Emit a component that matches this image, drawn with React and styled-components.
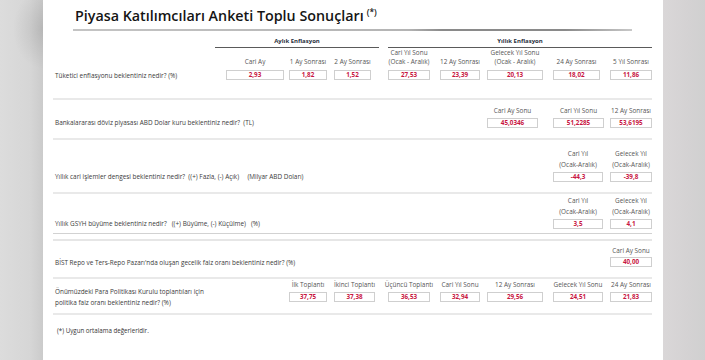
import React from 'react';
import styled, { createGlobalStyle } from 'styled-components';

const GlobalStyle = createGlobalStyle`
  html, body {
    margin: 0;
    padding: 0;
    background: #fff;
  }
  body {
    font-family: 'Open Sans', 'Liberation Sans', sans-serif;
    color: #333;
  }
`;

// column tracks from x=215 to x=652: gap before each box + box width
const GAPS = [11, 5, 7, 17, 10, 7, 10, 7];
const BOX_W = [58, 38, 37, 42, 40, 56, 50, 42];
const TRACKS = GAPS.map((g, i) => g + BOX_W[i]);

const Page = styled.div`
  display: flex;
  width: 705px;
  height: 360px;
  overflow: hidden;
`;

const SideLeft = styled.div`
  width: 43px;
  flex: none;
  background:
    radial-gradient(ellipse 30px 40px at 100% 8%, rgba(0, 0, 0, 0.1), transparent),
    linear-gradient(to right, #dcdcdc 0%, #d6d6d6 70%, #cbcbcb 100%);
`;

const SideRight = styled.div`
  flex: 1;
  background: linear-gradient(to right, #dad7d8 0%, #d4d2d3 60%, #d0d0d0 100%);
`;

const Main = styled.main`
  width: 620px;
  flex: none;
  box-sizing: border-box;
  padding: 6px 11px 0 10px;
  background: #fff;
`;

const TitleBlock = styled.header`
  margin: 0 20px 6px 20px;
`;

const Title = styled.h1`
  margin: 0 0 0 2px;
  height: 20px;
  font-size: 14.3px;
  line-height: 20px;
  font-weight: 600;
  color: #151515;

  sup {
    position: relative;
    top: -6px;
    font-size: 8.5px;
    line-height: 0;
    vertical-align: baseline;
    margin-left: 3px;
  }
`;

const TitleRule = styled.div`
  margin-top: 3px;
  height: 2px;
  background: linear-gradient(to right, #c4c4c4 0%, #b4b4b4 60%, #8a8a8a 66%, #8a8a8a 88%, #c8c8c8 100%);
`;

const Section = styled.section`
  display: grid;
  grid-template-columns: minmax(0, 1fr) ${TRACKS.map((t) => `${t}px`).join(' ')};
  align-items: end;
  padding: ${({ $pt }) => $pt}px 0 ${({ $pb }) => $pb}px 0;
  border-bottom: ${({ $rule }) => $rule || '2px solid #e9e9e9'};
  border-top: ${({ $top }) => $top || 'none'};
  margin-top: ${({ $mt }) => $mt || 0}px;
`;

const GroupHeader = styled.div`
  grid-row: 1;
  grid-column: ${({ $from, $to }) => `${$from + 2} / ${$to + 3}`};
  margin-left: ${({ $ml }) => $ml || 0}px;
  margin-right: ${({ $mr }) => $mr || 0}px;
  text-align: center;
  font-size: 6px;
  line-height: 9px;
  font-weight: 700;
  color: #2a3140;
  padding-bottom: 1px;
  border-bottom: 1.5px solid #5a5a5a;
`;

const Question = styled.div`
  grid-row: ${({ $row }) => $row};
  grid-column: 1;
  align-self: end;
  height: 10px;
  display: flex;
  align-items: center;
  padding-left: 2px;
  font-size: 6.4px;
  line-height: 11px;
  color: #3a3a3a;

  span {
    white-space: pre;
  }
`;

const Cell = styled.div`
  grid-row: ${({ $row }) => $row};
  grid-column: ${({ $col }) => $col + 2};
  justify-self: start;
  margin-left: ${({ $gap }) => $gap}px;
  width: ${({ $w }) => $w}px;
  display: flex;
  flex-direction: column;
  align-items: center;
`;

const Label = styled.div`
  font-size: 6.4px;
  line-height: ${({ $tight }) => ($tight ? 9 : 11.5)}px;
  margin-bottom: ${({ $tight }) => ($tight ? 4 : 1)}px;
  color: #555;
  text-align: center;
  white-space: nowrap;
`;

const ValueBox = styled.div`
  box-sizing: border-box;
  width: 100%;
  height: 10px;
  border: 1px solid #cfcfcf;
  background: #fff;
  text-align: center;
  font-size: 6.3px;
  line-height: 8px;
  font-weight: 700;
  color: #c8163f;
`;

const Footnote = styled.p`
  margin: 11px 0 0 4px;
  font-size: 6.2px;
  line-height: 10px;
  color: #333;
`;

const sections = [
  {
    pt: 0,
    pb: 18,
    tight: true,
    header: true,
    question: 'Tüketici enflasyonu beklentiniz nedir? (%)',
    cells: [
      [0, 'Cari Ay', '2,93'],
      [1, '1 Ay Sonrası', '1,82'],
      [2, '2 Ay Sonrası', '1,52'],
      [3, ['Cari Yıl Sonu', '(Ocak - Aralık)'], '27,53'],
      [4, '12 Ay Sonrası', '23,39'],
      [5, ['Gelecek Yıl Sonu', '(Ocak - Aralık)'], '20,13'],
      [6, '24 Ay Sonrası', '18,02', 47],
      [7, '5 Yıl Sonrası', '11,86'],
    ],
  },
  {
    pt: 5,
    pb: 10,
    question: 'Bankalararası döviz piyasası ABD Dolar kuru beklentiniz nedir?  (TL)',
    cells: [
      [5, 'Cari Ay Sonu', '45,0346', 51],
      [6, 'Cari Yıl Sonu', '51,2285', 51],
      [7, '12 Ay Sonrası', '53,6195'],
    ],
  },
  {
    pt: 8,
    pb: 10,
    question: 'Yıllık cari işlemler dengesi beklentiniz nedir?  ((+) Fazla, (-) Açık)     (Milyar ABD Doları)',
    cells: [
      [6, ['Cari Yıl', '(Ocak-Aralık)'], '-44,3'],
      [7, ['Gelecek Yıl', '(Ocak-Aralık)'], '-39,8'],
    ],
  },
  {
    pt: 1,
    pb: 4,
    rule: '1px solid #d2d2d2',
    question: 'Yıllık GSYH büyüme beklentiniz nedir?   ((+) Büyüme, (-) Küçülme)   (%)',
    cells: [
      [6, ['Cari Yıl', '(Ocak-Aralık)'], '3,5'],
      [7, ['Gelecek Yıl', '(Ocak-Aralık)'], '4,1'],
    ],
  },
  {
    pt: 4,
    pb: 10,
    mt: 5,
    top: '2px solid #e6e6e6',
    question: "BİST Repo ve Ters-Repo Pazarı'nda oluşan gecelik faiz oranı beklentiniz nedir? (%)",
    cells: [[7, 'Cari Ay Sonu', '40,00']],
  },
  {
    pt: 0,
    pb: 11,
    question: ['Önümüzdeki Para Politikası Kurulu toplantıları için', 'politika faiz oranı beklentiniz nedir? (%)'],
    cells: [
      [1, 'İlk Toplantı', '37,75'],
      [2, 'İkinci Toplantı', '37,38', 41],
      [3, 'Üçüncü Toplantı', '36,53'],
      [4, 'Cari Yıl Sonu', '32,94'],
      [5, '12 Ay Sonrası', '29,56'],
      [6, 'Gelecek Yıl Sonu', '24,51'],
      [7, '24 Ay Sonrası', '21,83'],
    ],
  },
];

function lines(text) {
  const parts = Array.isArray(text) ? text : [text];
  return parts.map((p, i) => (
    <React.Fragment key={i}>
      {i > 0 && <br />}
      {p}
    </React.Fragment>
  ));
}

function SurveySection({ data }) {
  const row = data.header ? 2 : 1;
  return (
    <Section $pt={data.pt} $pb={data.pb} $rule={data.rule} $top={data.top} $mt={data.mt}>
      {data.header && (
        <>
          <GroupHeader $from={0} $to={2} $mr={-8}>Aylık Enflasyon</GroupHeader>
          <GroupHeader $from={3} $to={7} $ml={17}>Yıllık Enflasyon</GroupHeader>
        </>
      )}
      <Question $row={row}>
        <span>{lines(data.question)}</span>
      </Question>
      {data.cells.map(([col, label, value, w]) => (
        <Cell key={col} $row={row} $col={col} $gap={GAPS[col]} $w={w || BOX_W[col]}>
          <Label $tight={data.tight}>{lines(label)}</Label>
          <ValueBox>{value}</ValueBox>
        </Cell>
      ))}
    </Section>
  );
}

export default function App() {
  return (
    <Page>
      <GlobalStyle />
      <SideLeft />
      <Main>
        <TitleBlock>
          <Title>
            Piyasa Katılımcıları Anketi Toplu Sonuçları<sup>(*)</sup>
          </Title>
          <TitleRule />
        </TitleBlock>
        {sections.map((s, i) => (
          <SurveySection key={i} data={s} />
        ))}
        <Footnote>(*) Uygun ortalama değerleridir.</Footnote>
      </Main>
      <SideRight />
    </Page>
  );
}
